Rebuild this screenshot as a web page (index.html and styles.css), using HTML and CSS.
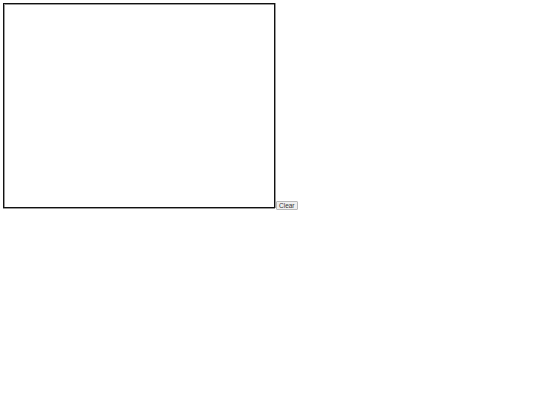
FILE: index.html
```html
<!DOCTYPE html>
<html>
<head>
<meta charset="utf-8">
<link rel="stylesheet" href="styles.css">
</head>
<body>
<canvas class="pad" width="270" height="203"></canvas><button class="clear">Clear</button>
</body>
</html>
```

FILE: styles.css
```css
html, body {
  background: #fff;
}
body {
  margin: 3px;
  font-family: "Liberation Sans", Arial, sans-serif;
}
.pad {
  border: 1px solid #111;
  box-shadow: 1px 0 0 #999, 0 1px 0 #999, inset 1px 1px 0 #999;
  width: 270px;
  height: 203px;
  vertical-align: baseline;
}
.clear {
  margin-left: 1px;
  font-family: "Liberation Sans", Arial, sans-serif;
  font-size: 6.5px;
  line-height: 7px;
  padding: 0 2px;
  border: 1px solid #b8b8b8;
  border-radius: 1px;
  background: #efefef;
  color: #333;
}
```
